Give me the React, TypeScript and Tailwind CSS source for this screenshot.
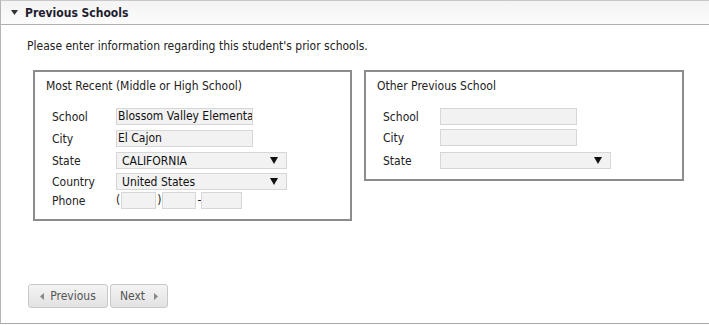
import React from "react";

const font = "font-['DejaVu_Sans_Condensed','DejaVu_Sans',sans-serif]";

function TextBox({ value = "", w = "w-[137px]" }: { value?: string; w?: string }) {
  return (
    <div className={`${w} h-[17px] bg-[#f2f2f2] border border-[#d6d6d6] pl-[1px] text-[12px] leading-[15px] text-[#111] overflow-hidden whitespace-nowrap`}>
      {value}
    </div>
  );
}

function SelectBox({ value = "" }: { value?: string }) {
  return (
    <div className="w-[171px] h-[17px] bg-[#f2f2f2] border border-[#d6d6d6] pl-[5px] pr-[8px] flex items-center justify-between text-[12px] leading-[15px] text-[#111]">
      <span className="pt-[1px]">{value}</span>
      <svg width="8" height="7" viewBox="0 0 8 7" className="mt-[-1px]">
        <path d="M0 0H8L4 7Z" fill="#111" />
      </svg>
    </div>
  );
}

function Row({ label, labelW, children, mt }: { label: string; labelW: string; children: React.ReactNode; mt: string }) {
  return (
    <div className={`flex items-start ${mt}`}>
      <div className={`${labelW} h-[17px] pt-[2px] text-[12px] leading-[15px] text-[#222]`}>{label}</div>
      {children}
    </div>
  );
}

export default function App() {
  return (
    <div className={`${font} w-[709px] h-[325px] bg-white overflow-hidden`}>
      <div className="w-[720px] h-[324px] border-t border-l border-b border-t-[#c8c8c8] border-l-[#b4b4b4] border-b-[#a8a8a8] flex flex-col">
        <div className="h-[24px] border-b border-[#b0b0b0] bg-gradient-to-b from-[#f4f4f4] to-[#fbfbfb] flex items-center pl-[10px]">
          <svg width="7" height="5" viewBox="0 0 7 5" className="mr-[7px]">
            <path d="M0 0H7L3.5 5Z" fill="#333" />
          </svg>
          <span className="text-[12px] font-bold text-[#1e1e30] leading-[16px]">Previous Schools</span>
        </div>
        <div className="flex-1 flex flex-col pl-[26px]">
          <div className="mt-[13px] text-[12px] leading-[16px] text-[#222]">
            Please enter information regarding this student's prior schools.
          </div>
          <div className="flex items-start mt-[16px] ml-[6px]">
            <div className="w-[319px] border-2 border-[#8c8c8c] pt-[7px] pb-[10px] pl-[11px]">
              <div className="text-[12px] leading-[15px] text-[#222]">Most Recent (Middle or High School)</div>
              <div className="pl-[6px] mt-[14px]">
                <Row label="School" labelW="w-[64px]" mt="mt-0">
                  <TextBox value="Blossom Valley Elementary" />
                </Row>
                <Row label="City" labelW="w-[64px]" mt="mt-[5px]">
                  <TextBox value="El Cajon" />
                </Row>
                <Row label="State" labelW="w-[64px]" mt="mt-[5px]">
                  <SelectBox value="CALIFORNIA" />
                </Row>
                <Row label="Country" labelW="w-[64px]" mt="mt-[4px]">
                  <SelectBox value="United States" />
                </Row>
                <Row label="Phone" labelW="w-[64px]" mt="mt-[2px]">
                  <div className="flex items-center text-[12px] leading-[15px] text-[#222]">
                    <span className="mr-[1px]">(</span>
                    <TextBox w="w-[35px]" />
                    <span className="mx-[1px]">)</span>
                    <TextBox w="w-[34px]" />
                    <span className="ml-[1px]">-</span>
                    <TextBox w="w-[41px]" />
                  </div>
                </Row>
              </div>
            </div>
            <div className="w-[320px] ml-[12px] border-2 border-[#8c8c8c] pt-[7px] pb-[10px] pl-[11px]">
              <div className="text-[12px] leading-[15px] text-[#222]">Other Previous School</div>
              <div className="pl-[6px] mt-[14px]">
                <Row label="School" labelW="w-[57px]" mt="mt-0">
                  <TextBox />
                </Row>
                <Row label="City" labelW="w-[57px]" mt="mt-[4px]">
                  <TextBox />
                </Row>
                <Row label="State" labelW="w-[57px]" mt="mt-[6px]">
                  <SelectBox />
                </Row>
              </div>
            </div>
          </div>
          <div className="mt-auto mb-[15px] flex gap-[2px] ml-[1px]">
            <button className="w-[80px] h-[24px] rounded-[3px] border border-[#c8c8c8] bg-gradient-to-b from-[#f4f4f4] to-[#e2e2e2] flex items-center justify-center gap-[6px] text-[12px] text-[#555]">
              <svg width="4" height="7" viewBox="0 0 4 7"><path d="M4 0V7L0 3.5Z" fill="#888" /></svg>
              <span>Previous</span>
            </button>
            <button className="w-[58px] h-[24px] rounded-[3px] border border-[#c8c8c8] bg-gradient-to-b from-[#f4f4f4] to-[#e2e2e2] flex items-center justify-center gap-[9px] text-[12px] text-[#555]">
              <span>Next</span>
              <svg width="4" height="7" viewBox="0 0 4 7"><path d="M0 0V7L4 3.5Z" fill="#888" /></svg>
            </button>
          </div>
        </div>
      </div>
    </div>
  );
}
